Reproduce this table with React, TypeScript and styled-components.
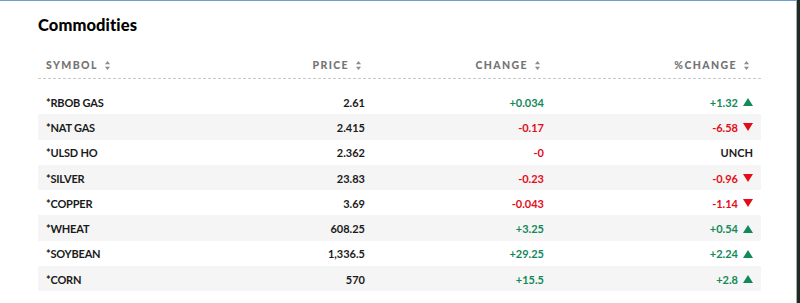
import React from "react";
import styled, { createGlobalStyle } from "styled-components";

const GlobalStyle = createGlobalStyle`
  html, body {
    margin: 0;
    padding: 0;
    background: #1f2a24;
  }
  body {
    font-family: Lato, "Open Sans", Arial, sans-serif;
    -webkit-font-smoothing: antialiased;
  }
`;

const Panel = styled.div`
  width: 797px;
  height: 303px;
  box-sizing: border-box;
  background: #ffffff;
  border-top: 1px solid #6a9fd2;
  border-right: 1px solid #a7b0ac;
  padding: 14px 0 0 38px;
`;

const Title = styled.h2`
  margin: 0;
  font-family: Lato, Arial, sans-serif;
  font-weight: 900;
  font-size: 16.5px;
  line-height: 20px;
  color: #000;
  letter-spacing: 0.1px;
`;

const Table = styled.div`
  width: 723px;
  margin-top: 17px;
`;

const columns = "180px 155px 179px 209px";

const HeaderRow = styled.div`
  display: grid;
  grid-template-columns: ${columns};
  height: 27px;
  align-items: center;
  border-bottom: 1px dashed #c8c8c8;
  box-sizing: border-box;
`;

const HeaderCell = styled.div<{ $align: "left" | "right" }>`
  display: flex;
  align-items: center;
  justify-content: ${(p) => (p.$align === "left" ? "flex-start" : "flex-end")};
  gap: 7px;
  padding-left: ${(p) => (p.$align === "left" ? "8px" : "0")};
  padding-right: ${(p) => (p.$align === "left" ? "0" : "12px")};
  font-size: 10.5px;
  font-weight: 900;
  letter-spacing: 1.4px;
  color: #747474;
  text-transform: uppercase;
`;

const Body = styled.div`
  margin-top: 10px;
`;

const Row = styled.div<{ $striped: boolean }>`
  display: grid;
  grid-template-columns: ${columns};
  height: 25.3px;
  align-items: center;
  background: ${(p) => (p.$striped ? "#f5f5f5" : "transparent")};
`;

const Cell = styled.div<{ $align: "left" | "right"; $tone?: "up" | "down" | "flat" }>`
  display: flex;
  align-items: center;
  justify-content: ${(p) => (p.$align === "left" ? "flex-start" : "flex-end")};
  gap: 5px;
  padding: 1px 8px 0 8px;
  font-size: 11px;
  font-weight: 700;
  letter-spacing: ${(p) => (p.$align === "left" ? "-0.2px" : "0")};
  color: ${(p) =>
    p.$tone === "up" ? "#12895a" : p.$tone === "down" ? "#e40c18" : "#1a1a1a"};
`;

const Sort = () => (
  <svg width="5" height="9" viewBox="0 0 5 9" aria-hidden>
    <path d="M2.5 0 L5 3.3 L0 3.3 Z" fill="#8a8a8a" />
    <path d="M2.5 9 L5 5.7 L0 5.7 Z" fill="#8a8a8a" />
  </svg>
);

const Arrow = ({ dir }: { dir: "up" | "down" }) =>
  dir === "up" ? (
    <svg width="10" height="8" viewBox="0 0 10 8" aria-hidden>
      <path d="M5 0 L10 8 L0 8 Z" fill="#12895a" />
    </svg>
  ) : (
    <svg width="10" height="8" viewBox="0 0 10 8" aria-hidden>
      <path d="M0 0 L10 0 L5 8 Z" fill="#e40c18" />
    </svg>
  );

type Item = { sym: string; price: string; chg: string; pct: string };

const data: Item[] = [
  { sym: "*RBOB GAS", price: "2.61", chg: "+0.034", pct: "+1.32" },
  { sym: "*NAT GAS", price: "2.415", chg: "-0.17", pct: "-6.58" },
  { sym: "*ULSD HO", price: "2.362", chg: "-0", pct: "UNCH" },
  { sym: "*SILVER", price: "23.83", chg: "-0.23", pct: "-0.96" },
  { sym: "*COPPER", price: "3.69", chg: "-0.043", pct: "-1.14" },
  { sym: "*WHEAT", price: "608.25", chg: "+3.25", pct: "+0.54" },
  { sym: "*SOYBEAN", price: "1,336.5", chg: "+29.25", pct: "+2.24" },
  { sym: "*CORN", price: "570", chg: "+15.5", pct: "+2.8" },
];

const tone = (v: string): "up" | "down" | "flat" =>
  v.startsWith("+") ? "up" : v.startsWith("-") ? "down" : "flat";

export default function App() {
  return (
    <>
      <GlobalStyle />
      <Panel>
        <Title>Commodities</Title>
        <Table>
          <HeaderRow>
            <HeaderCell $align="left">
              Symbol <Sort />
            </HeaderCell>
            <HeaderCell $align="right">
              Price <Sort />
            </HeaderCell>
            <HeaderCell $align="right">
              Change <Sort />
            </HeaderCell>
            <HeaderCell $align="right">
              %Change <Sort />
            </HeaderCell>
          </HeaderRow>
          <Body>
            {data.map((d, i) => {
              const pt = tone(d.pct);
              return (
                <Row key={d.sym} $striped={i % 2 === 1}>
                  <Cell $align="left">{d.sym}</Cell>
                  <Cell $align="right">{d.price}</Cell>
                  <Cell $align="right" $tone={tone(d.chg)}>
                    {d.chg}
                  </Cell>
                  <Cell $align="right" $tone={pt}>
                    {d.pct}
                    {pt !== "flat" && <Arrow dir={pt} />}
                  </Cell>
                </Row>
              );
            })}
          </Body>
        </Table>
      </Panel>
    </>
  );
}
